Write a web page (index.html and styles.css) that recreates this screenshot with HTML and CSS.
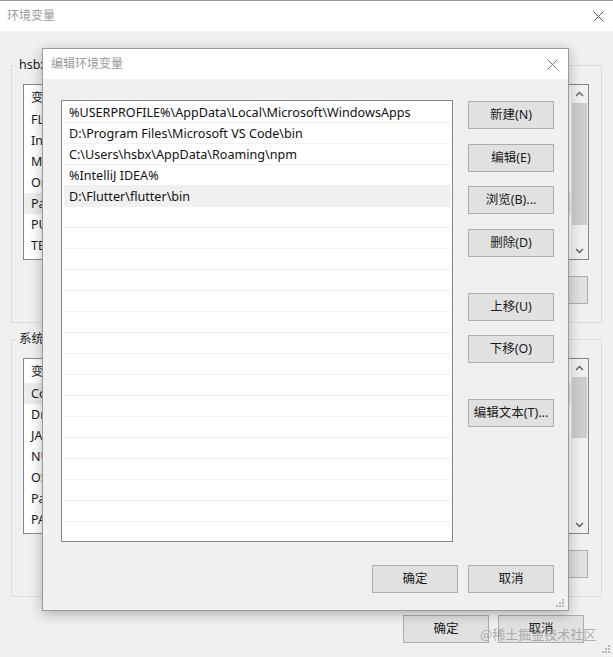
FILE: index.html
```html
<!DOCTYPE html>
<html lang="zh-CN">
<head>
<meta charset="utf-8">
<title>环境变量</title>
<link rel="stylesheet" href="styles.css">
</head>
<body>
<div class="window">
  <div class="titlebar">
    <span class="title">环境变量</span>
    <svg class="close" width="11" height="11" viewBox="0 0 11 11"><path d="M0.5 0.5 L10.5 10.5 M10.5 0.5 L0.5 10.5" stroke="#555" stroke-width="1" fill="none"/></svg>
  </div>
  <div class="content">
    <div class="group">
      <div class="group-label">hsbx 的用户变量(U)</div>
      <div class="listview">
        <div class="lv-body">
          <div class="lv-header">变量</div>
          <div class="lv-row">FLUTTER_STORAGE_BASE_URL</div>
          <div class="lv-row">IntelliJ IDEA</div>
          <div class="lv-row">MAVEN_HOME</div>
          <div class="lv-row">OneDrive</div>
          <div class="lv-row sel">Path</div>
          <div class="lv-row">PUB_HOSTED_URL</div>
          <div class="lv-row">TEMP</div>
        </div>
        <div class="vscroll">
          <div class="arrow"><svg width="9" height="6" viewBox="0 0 9 6"><path d="M1 5 L4.5 1.5 L8 5" stroke="#606060" stroke-width="1.4" fill="none"/></svg></div>
          <div class="track"><div class="thumb thumb-user"></div></div>
          <div class="arrow"><svg width="9" height="6" viewBox="0 0 9 6"><path d="M1 1 L4.5 4.5 L8 1" stroke="#606060" stroke-width="1.4" fill="none"/></svg></div>
        </div>
      </div>
      <div class="btn-row">
        <button class="btn">新建(N)...</button>
        <button class="btn">编辑(E)...</button>
        <button class="btn">删除(D)</button>
      </div>
    </div>
    <div class="group">
      <div class="group-label">系统变量(S)</div>
      <div class="listview">
        <div class="lv-body">
          <div class="lv-header">变量</div>
          <div class="lv-row sel">ComSpec</div>
          <div class="lv-row">DriverData</div>
          <div class="lv-row">JAVA_HOME</div>
          <div class="lv-row">NUMBER_OF_PROCESSORS</div>
          <div class="lv-row">OS</div>
          <div class="lv-row">Path</div>
          <div class="lv-row">PATHEXT</div>
        </div>
        <div class="vscroll">
          <div class="arrow"><svg width="9" height="6" viewBox="0 0 9 6"><path d="M1 5 L4.5 1.5 L8 5" stroke="#606060" stroke-width="1.4" fill="none"/></svg></div>
          <div class="track"><div class="thumb thumb-sys"></div></div>
          <div class="arrow"><svg width="9" height="6" viewBox="0 0 9 6"><path d="M1 1 L4.5 4.5 L8 1" stroke="#606060" stroke-width="1.4" fill="none"/></svg></div>
        </div>
      </div>
      <div class="btn-row">
        <button class="btn">新建(W)...</button>
        <button class="btn">编辑(I)...</button>
        <button class="btn">删除(L)</button>
      </div>
    </div>
    <div class="footer">
      <button class="btn">确定</button>
      <button class="btn">取消</button>
    </div>
  </div>
  <svg class="grip grip-window" width="8" height="8" viewBox="0 0 8 8"><g fill="#b8b8b8"><rect x="6" y="0" width="2" height="2"/><rect x="3" y="3" width="2" height="2"/><rect x="6" y="3" width="2" height="2"/><rect x="0" y="6" width="2" height="2"/><rect x="3" y="6" width="2" height="2"/><rect x="6" y="6" width="2" height="2"/></g></svg>

  <div class="dialog">
    <div class="dlg-titlebar">
      <span class="dlg-title">编辑环境变量</span>
      <svg class="close" width="11" height="11" viewBox="0 0 11 11"><path d="M0.5 0.5 L10.5 10.5 M10.5 0.5 L0.5 10.5" stroke="#777" stroke-width="1" fill="none"/></svg>
    </div>
    <div class="dlg-body">
      <div class="dlg-main">
        <div class="pathlist">
          <div class="p-row">%USERPROFILE%\AppData\Local\Microsoft\WindowsApps</div>
          <div class="p-row">D:\Program Files\Microsoft VS Code\bin</div>
          <div class="p-row">C:\Users\hsbx\AppData\Roaming\npm</div>
          <div class="p-row">%IntelliJ IDEA%</div>
          <div class="p-row sel">D:\Flutter\flutter\bin</div>
          <div class="p-row"></div>
          <div class="p-row"></div>
          <div class="p-row"></div>
          <div class="p-row"></div>
          <div class="p-row"></div>
          <div class="p-row"></div>
          <div class="p-row"></div>
          <div class="p-row"></div>
          <div class="p-row"></div>
          <div class="p-row"></div>
          <div class="p-row"></div>
          <div class="p-row"></div>
          <div class="p-row"></div>
          <div class="p-row"></div>
          <div class="p-row"></div>
          <div class="p-row last"></div>
        </div>
        <div class="dlg-buttons">
          <button class="btn">新建(N)</button>
          <button class="btn">编辑(E)</button>
          <button class="btn">浏览(B)...</button>
          <button class="btn">删除(D)</button>
          <button class="btn gap-lg">上移(U)</button>
          <button class="btn">下移(O)</button>
          <button class="btn gap-lg">编辑文本(T)...</button>
        </div>
      </div>
      <div class="dlg-footer">
        <button class="btn">确定</button>
        <button class="btn">取消</button>
      </div>
    </div>
    <svg class="grip grip-dialog" width="8" height="8" viewBox="0 0 8 8"><g fill="#b8b8b8"><rect x="6" y="0" width="2" height="2"/><rect x="3" y="3" width="2" height="2"/><rect x="6" y="3" width="2" height="2"/><rect x="0" y="6" width="2" height="2"/><rect x="3" y="6" width="2" height="2"/><rect x="6" y="6" width="2" height="2"/></g></svg>
  </div>

  <div class="watermark">@稀土掘金技术社区</div>
</div>
</body>
</html>
```

FILE: styles.css
```css
* { box-sizing: border-box; }

html, body {
  margin: 0;
  padding: 0;
}

body {
  width: 613px;
  height: 657px;
  overflow: hidden;
  background: #f0f0f0;
  font-family: "Noto Sans", "Noto Sans CJK SC", sans-serif;
  font-size: 12px;
  color: #1a1a1a;
}

.window {
  position: relative;
  width: 613px;
  height: 657px;
  background: #f0f0f0;
  border-top: 1px solid #9a9a9a;
}

.titlebar {
  height: 30px;
  background: #ffffff;
  display: flex;
  align-items: center;
  justify-content: space-between;
  padding: 0 9px 0 7px;
}

.title {
  color: #9a9a9a;
  font-size: 12px;
  line-height: 16px;
}

.close { display: block; }

.content {
  padding: 0;
}

.group {
  margin: 34px 11px 0 11px;
  height: 258px;
  border: 1px solid #dcdcdc;
}

.group + .group {
  margin-top: 16px;
}

.group-label {
  margin: -9px 0 0 4px;
  padding: 0 3px;
  width: fit-content;
  height: 16px;
  line-height: 16px;
  background: #f0f0f0;
  color: #1a1a1a;
  font-size: 12.5px;
}

.listview {
  margin: 11px 12px 0 11px;
  height: 176px;
  border: 1px solid #828790;
  background: #ffffff;
  display: flex;
}

.lv-body {
  flex: 1;
  overflow: hidden;
  font-size: 12.5px;
}

.lv-header {
  height: 24px;
  line-height: 25px;
  padding-left: 7px;
}

.lv-row {
  height: 21px;
  line-height: 22px;
  padding-left: 7px;
  white-space: nowrap;
}

.lv-row.sel {
  background: #ededed;
}

.vscroll {
  width: 17px;
  display: flex;
  flex-direction: column;
  background: #f0f0f0;
}

.arrow {
  height: 17px;
  display: flex;
  align-items: center;
  justify-content: center;
}

.track {
  flex: 1;
  padding: 0 1px;
}

.thumb {
  background: #cdcdcd;
  margin-top: 1px;
}

.thumb-user { height: 122px; }
.thumb-sys { height: 61px; }

.btn-row {
  margin: 16px 13px 0 0;
  display: flex;
  justify-content: flex-end;
  gap: 9px;
}

.btn {
  width: 86px;
  height: 28px;
  padding: 0;
  background: #e1e1e1;
  border: 1px solid #adadad;
  border-radius: 0;
  font-family: "Noto Sans", "Noto Sans CJK SC", sans-serif;
  font-size: 12.5px;
  color: #1a1a1a;
  line-height: 16px;
}

.footer {
  margin: 18px 29px 0 0;
  display: flex;
  justify-content: flex-end;
  gap: 9px;
}

.grip {
  position: absolute;
}

.grip-window {
  right: 3px;
  bottom: 4px;
}

/* modal dialog overlaying the window */
.dialog {
  position: absolute;
  left: 42px;
  top: 47px;
  width: 527px;
  height: 563px;
  border: 1px solid #9b9b9b;
  background: #f0f0f0;
  box-shadow: 0 3px 12px rgba(0, 0, 0, 0.28);
  display: flex;
  flex-direction: column;
}

.dlg-titlebar {
  height: 30px;
  background: #ffffff;
  display: flex;
  align-items: center;
  justify-content: space-between;
  padding: 0 10px 0 8px;
}

.dlg-title {
  color: #9a9a9a;
  line-height: 16px;
}

.dlg-body {
  padding: 21px 14px 0 18px;
}

.dlg-main {
  display: flex;
  gap: 15px;
}

.pathlist {
  width: 393px;
  height: 442px;
  border: 1px solid #828790;
  background: #ffffff;
  padding: 1px 1px 0 2px;
  overflow: hidden;
}

.p-row {
  height: 21px;
  line-height: 20px;
  padding-top: 1px;
  border-bottom: 1px solid #f0f0f0;
  padding-left: 5px;
  white-space: nowrap;
  color: #111;
  font-size: 12.6px;
}

.p-row.sel {
  background: #f0f0f0;
}

.dlg-buttons {
  padding-top: 1px;
  display: flex;
  flex-direction: column;
  gap: 14.5px;
}

.dlg-buttons .gap-lg {
  margin-top: 21.5px;
}

.dlg-footer {
  margin-top: 23px;
  display: flex;
  justify-content: flex-end;
  gap: 10px;
}

.grip-dialog {
  right: 4px;
  bottom: 3px;
}

.watermark {
  position: absolute;
  left: 480px;
  top: 624px;
  font-family: "Noto Sans CJK SC", sans-serif;
  font-size: 13px;
  line-height: 18px;
  color: rgba(150, 150, 150, 0.75);
  white-space: nowrap;
}
```
